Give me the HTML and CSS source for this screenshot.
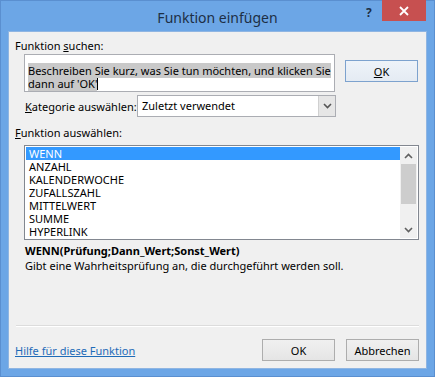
FILE: index.html
```html
<!DOCTYPE html>
<html lang="de">
<head>
<meta charset="utf-8">
<title>Funktion einfügen</title>
<link rel="stylesheet" href="styles.css">
</head>
<body>
<div class="window">
  <div class="titlebar">
    <div class="title">Funktion einfügen</div>
    <div class="help">?</div>
    <div class="close">
      <svg width="10" height="10" viewBox="0 0 10 10"><path d="M1 1 L9 9 M9 1 L1 9" stroke="#fff" stroke-width="1.8" fill="none"/></svg>
    </div>
  </div>
  <div class="dialog">
    <div class="label l-search">Funktion <u>s</u>uchen:</div>
    <div class="search-row">
      <div class="textbox"><span class="sel">Beschreiben Sie kurz, was Sie tun möchten, und klicken Sie dann auf 'OK'</span><span class="caret"></span></div>
      <button class="btn btn-go"><u>O</u>K</button>
    </div>
    <div class="cat-row">
      <div class="label cat-label"><u>K</u>ategorie auswählen:</div>
      <div class="select">
        <span class="select-text">Zuletzt verwendet</span>
        <span class="select-arrow"><svg width="9" height="6" viewBox="0 0 9 6"><path d="M1 1 L4.5 4.5 L8 1" stroke="#555" stroke-width="1.6" fill="none"/></svg></span>
      </div>
    </div>
    <div class="label l-func"><u>F</u>unktion auswählen:</div>
    <div class="listbox">
      <ul class="items">
        <li class="active">WENN</li>
        <li>ANZAHL</li>
        <li>KALENDERWOCHE</li>
        <li>ZUFALLSZAHL</li>
        <li>MITTELWERT</li>
        <li>SUMME</li>
        <li>HYPERLINK</li>
      </ul>
      <div class="scrollbar">
        <span class="sb-btn"><svg width="9" height="6" viewBox="0 0 9 6"><path d="M1 5 L4.5 1.5 L8 5" stroke="#606060" stroke-width="1.6" fill="none"/></svg></span>
        <span class="sb-track"><span class="sb-thumb"></span></span>
        <span class="sb-btn"><svg width="9" height="6" viewBox="0 0 9 6"><path d="M1 1 L4.5 4.5 L8 1" stroke="#606060" stroke-width="1.6" fill="none"/></svg></span>
      </div>
    </div>
    <div class="syntax">WENN(Prüfung;Dann_Wert;Sonst_Wert)</div>
    <div class="desc">Gibt eine Wahrheitsprüfung an, die durchgeführt werden soll.</div>
    <div class="spacer"></div>
    <div class="separator"></div>
    <div class="footer">
      <a class="link" href="#">Hilfe für diese Funktion</a>
      <div class="buttons">
        <button class="btn">OK</button>
        <button class="btn">Abbrechen</button>
      </div>
    </div>
  </div>
</div>
</body>
</html>
```

FILE: styles.css
```css
* { box-sizing: border-box; }
html, body { margin: 0; padding: 0; }
body {
  width: 435px;
  height: 378px;
  background: #ffffff;
  font-family: "Noto Sans", "Open Sans", sans-serif;
  font-size: 11px;
  color: #000;
}
.window {
  width: 435px;
  height: 377px;
  background: #6ca6e6;
  border: 1px solid #5a8fd0;
  padding: 0 7px 7px 7px;
  display: flex;
  flex-direction: column;
}
.titlebar {
  position: relative;
  height: 30px;
  flex: none;
}
.title {
  text-align: center;
  font-size: 14px;
  line-height: 30px;
  color: #1d2f45;
  padding-top: 2px;
}
.help {
  position: absolute;
  left: 358px;
  top: 3px;
  font-weight: bold;
  font-size: 12px;
  color: #1d2f45;
}
.close {
  position: absolute;
  left: 374px;
  top: -1px;
  width: 44px;
  height: 21px;
  background: #c75050;
  display: flex;
  align-items: center;
  justify-content: center;
}
.dialog {
  flex: 1;
  background: #f0f0f0;
  border: 1px solid #8fb5e2;
  padding: 0 7px 7px 6px;
  display: flex;
  flex-direction: column;
}
.label { line-height: 15px; white-space: nowrap; }
.l-search { margin-top: 6px; }
.search-row {
  display: flex;
  align-items: flex-start;
  margin-top: 1px;
  padding-left: 9px;
}
.textbox {
  width: 311px;
  height: 38px;
  background: #fff;
  border: 1px solid #abadb3;
  padding: 9px 2px 0 3px;
  line-height: 13px;
}
.sel { background: #c9c9c9; }
.caret {
  display: inline-block;
  width: 1px;
  height: 12px;
  background: #000;
  vertical-align: -2px;
}
.btn {
  width: 73px;
  height: 22px;
  border: 1px solid #adadad;
  background: linear-gradient(#f0f0f0, #e5e5e5);
  font-family: inherit;
  font-size: 11px;
  color: #000;
  padding: 0;
}
.btn-go {
  margin-left: 10px;
  margin-top: 6px;
  border-color: #7da2ce;
  background: linear-gradient(#eef3f9, #e4ebf3);
}
.cat-row {
  display: flex;
  align-items: center;
  margin-top: 3px;
  padding-left: 10px;
}
.cat-label { width: 112px; }
.select {
  width: 199px;
  height: 22px;
  background: #fff;
  border: 1px solid #abadb3;
  display: flex;
  align-items: stretch;
}
.select-text { flex: 1; padding-left: 4px; line-height: 20px; }
.select-arrow {
  width: 17px;
  background: #e6e6e6;
  border-left: 1px solid #d0d0d0;
  display: flex;
  align-items: center;
  justify-content: center;
}
.l-func { margin-top: 8px; }
.listbox {
  margin-top: 5px;
  margin-left: 9px;
  width: 395px;
  height: 95px;
  background: #fff;
  border: 1px solid #828790;
  display: flex;
  padding: 1px;
}
.items {
  list-style: none;
  margin: 0;
  padding: 0;
  flex: 1;
}
.items li {
  height: 13px;
  line-height: 13px;
  padding-left: 3px;
  white-space: nowrap;
}
.items li.active { background: #3399ff; color: #fff; }
.scrollbar {
  width: 17px;
  background: #f0f0f0;
  display: flex;
  flex-direction: column;
}
.sb-btn {
  height: 17px;
  display: flex;
  align-items: center;
  justify-content: center;
}
.sb-track {
  flex: 1;
  display: flex;
  flex-direction: column;
  padding: 0 1px;
}
.sb-thumb {
  height: 40px;
  background: #cdcdcd;
}
.syntax {
  margin-top: 3px;
  padding-left: 10px;
  font-weight: bold;
  line-height: 15px;
}
.desc {
  padding-left: 10px;
  line-height: 15px;
}
.spacer { flex: 1; }
.separator {
  background: #dcdcdc;
  border-bottom: 1px solid #fff;
  height: 2px;
  margin: 0 0 12px 1px;
}
.footer {
  display: flex;
  align-items: center;
  justify-content: space-between;
}
.link {
  color: #1e6bb8;
  text-decoration: underline;
  line-height: 15px;
}
.buttons { display: flex; gap: 11px; }
```
